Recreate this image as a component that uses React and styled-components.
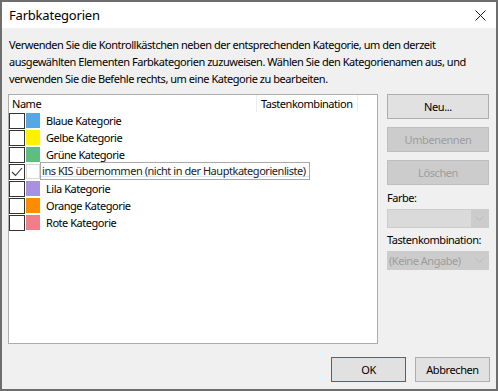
import React from "react";
import styled, { createGlobalStyle } from "styled-components";

const categories = [
  { name: "Blaue Kategorie", color: "#55a8e3" },
  { name: "Gelbe Kategorie", color: "#fff100" },
  { name: "Grüne Kategorie", color: "#5fbe7d" },
  { name: "ins KIS übernommen (nicht in der Hauptkategorienliste)", color: null, checked: true, editing: true },
  { name: "Lila Kategorie", color: "#a791e0" },
  { name: "Orange Kategorie", color: "#ff8c00" },
  { name: "Rote Kategorie", color: "#f07f89" },
];

function App() {
  return (
    <>
      <Global />
      <Frame>
        <Window>
          <TitleBar>
            <Title>Farbkategorien</Title>
            <CloseButton>
              <svg width="11" height="11" viewBox="0 0 11 11">
                <path d="M0.5 0.5 L10.5 10.5 M10.5 0.5 L0.5 10.5" stroke="#1a1a1a" strokeWidth="1" />
              </svg>
            </CloseButton>
          </TitleBar>
          <Body>
            <Description>
              Verwenden Sie die Kontrollkästchen neben der entsprechenden Kategorie, um den derzeit
              <br />
              ausgewählten Elementen Farbkategorien zuzuweisen. Wählen Sie den Kategorienamen aus, und
              <br />
              verwenden Sie die Befehle rechts, um eine Kategorie zu bearbeiten.
            </Description>
            <Main>
              <ListBox>
                <HeaderRow>
                  <NameHeader>Name</NameHeader>
                  <KeyHeader>Tastenkombination</KeyHeader>
                </HeaderRow>
                {categories.map((c) => (
                  <Row key={c.name}>
                    <CheckBox>
                      {c.checked && (
                        <svg width="14" height="14" viewBox="0 0 14 14">
                          <path d="M2 7 L5.5 10.5 L12 3" stroke="#333" strokeWidth="1.1" fill="none" />
                        </svg>
                      )}
                    </CheckBox>
                    <Swatch $color={c.color} />
                    {c.editing ? <EditBox>{c.name}</EditBox> : <Label>{c.name}</Label>}
                  </Row>
                ))}
              </ListBox>
              <Side>
                <Button>Neu...</Button>
                <Button disabled>Umbenennen</Button>
                <Button disabled>Löschen</Button>
                <FieldLabel>Farbe:</FieldLabel>
                <Select $light>
                  <SelectValue />
                  <Chevron />
                </Select>
                <FieldLabel>Tastenkombination:</FieldLabel>
                <Select>
                  <SelectValue>(Keine Angabe)</SelectValue>
                  <Chevron />
                </Select>
              </Side>
            </Main>
            <Footer>
              <Button $default $width={75}>OK</Button>
              <Button $width={75}>Abbrechen</Button>
            </Footer>
          </Body>
        </Window>
      </Frame>
    </>
  );
}

function Chevron() {
  return (
    <ChevronBox>
      <svg width="9" height="5" viewBox="0 0 9 5">
        <path d="M0.5 0.5 L4.5 4.5 L8.5 0.5" stroke="#b8b8b8" strokeWidth="1" fill="none" />
      </svg>
    </ChevronBox>
  );
}

const Global = createGlobalStyle`
  body {
    margin: 0;
    background: #6e6e6e;
    font-family: "Segoe UI", "Noto Sans", sans-serif;
    font-size: 11px;
    letter-spacing: -0.46px;
  }
`;

const Frame = styled.div`
  width: 498px;
  height: 391px;
  box-sizing: border-box;
  padding: 2px;
  background: #6e6e6e;
`;

const Window = styled.div`
  height: 100%;
  display: flex;
  flex-direction: column;
  background: #f0f0f0;
`;

const TitleBar = styled.div`
  height: 26px;
  flex: none;
  background: #ffffff;
  display: flex;
  align-items: center;
  justify-content: space-between;
  padding: 0 10px 0 7px;
`;

const Title = styled.div`
  font-size: 13px;
  letter-spacing: -0.2px;
  color: #000;
`;

const CloseButton = styled.div`
  display: flex;
`;

const Body = styled.div`
  flex: 1;
  display: flex;
  flex-direction: column;
  padding: 8px 6px 7px 6px;
`;

const Description = styled.p`
  margin: 0 0 7px 1px;
  line-height: 17px;
  white-space: nowrap;
  color: #000;
`;

const Main = styled.div`
  display: flex;
  gap: 9px;
  align-items: flex-start;
`;

const ListBox = styled.div`
  width: 370px;
  height: 250px;
  box-sizing: border-box;
  background: #fff;
  border: 1px solid #adadad;
  display: flex;
  flex-direction: column;
`;

const HeaderRow = styled.div`
  height: 17px;
  display: flex;
  line-height: 17px;
  color: #000;
`;

const NameHeader = styled.div`
  width: 248px;
  padding-left: 3px;
  box-sizing: border-box;
  border-right: 1px solid #ececec;
`;

const KeyHeader = styled.div`
  width: 101px;
  padding-left: 4px;
  box-sizing: border-box;
  border-right: 1px solid #ececec;
  white-space: nowrap;
`;

const Row = styled.div`
  position: relative;
  height: 17px;
  display: flex;
  align-items: center;
  color: #000;
`;

const CheckBox = styled.div`
  width: 16px;
  height: 16px;
  box-sizing: border-box;
  border: 1px solid #333;
  background: #fff;
  display: flex;
  align-items: center;
  justify-content: center;
  flex: none;
`;

const Swatch = styled.div`
  width: 14px;
  height: 15px;
  margin-left: 1px;
  box-sizing: border-box;
  flex: none;
  background: ${(p) => p.$color || "#fff"};
  border: ${(p) => (p.$color ? "none" : "1px solid #d6d6d6")};
`;

const Label = styled.span`
  margin-left: 6px;
  white-space: nowrap;
`;

const EditBox = styled.span`
  position: absolute;
  left: 31px;
  top: -1px;
  height: 18px;
  box-sizing: border-box;
  padding: 0 3px 0 1px;
  line-height: 16px;
  background: #fff;
  border: 1px solid #a8a8a8;
  white-space: nowrap;
  color: #222;
  box-shadow: inset 0 -2px 0 #ffffff, inset 0 -3px 0 #dde6f0;
`;

const Side = styled.div`
  width: 102px;
  display: flex;
  flex-direction: column;
`;

const Button = styled.button`
  width: ${(p) => (p.$width ? `${p.$width}px` : "100%")};
  height: 25px;
  margin-bottom: 8px;
  padding: 0;
  font-family: inherit;
  font-size: 11px;
  letter-spacing: -0.4px;
  color: #000;
  background: #e1e1e1;
  border: 1px solid ${(p) => (p.$default ? "#0078d7" : "#adadad")};
  box-sizing: border-box;

  &:disabled {
    background: #cccccc;
    border-color: #bfbfbf;
    color: #9d9d9d;
  }
`;

const FieldLabel = styled.div`
  line-height: 16px;
  color: #000;
  white-space: nowrap;
  margin: -3px 0 3px;
`;

const Select = styled.div`
  height: 19px;
  box-sizing: border-box;
  display: flex;
  background: ${(p) => (p.$light ? "#dadada" : "#cccccc")};
  border: 1px solid #cccccc;
  margin-bottom: 7px;
`;

const SelectValue = styled.div`
  flex: 1;
  color: #9d9d9d;
  line-height: 17px;
  padding-left: 1px;
  white-space: nowrap;
`;

const ChevronBox = styled.div`
  width: 17px;
  display: flex;
  align-items: center;
  justify-content: center;
  background: #cccccc;
`;

const Footer = styled.div`
  margin-top: auto;
  display: flex;
  justify-content: flex-end;
  gap: 9px;

  & > button {
    margin-bottom: 0;
  }
`;

export default App;
